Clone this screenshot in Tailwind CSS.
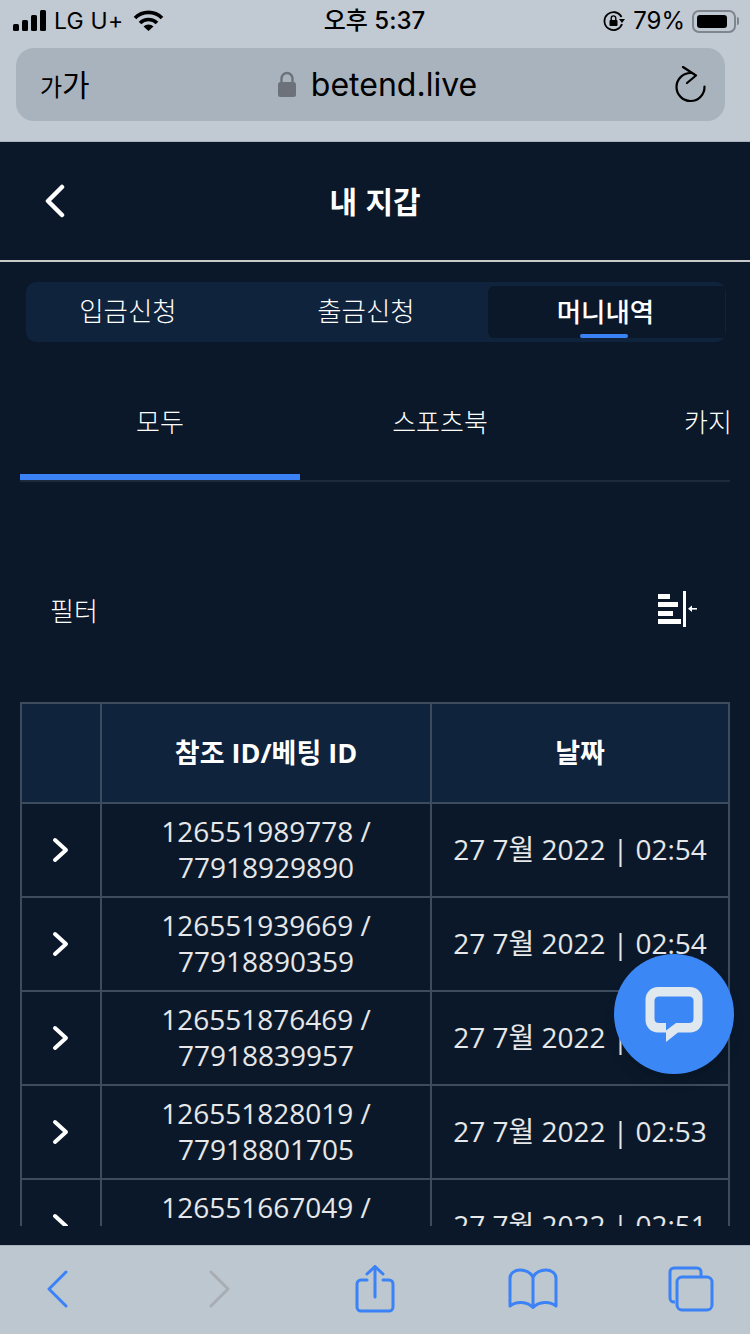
<!DOCTYPE html>
<html lang="ko">
<head>
  <meta charset="UTF-8" />
  <meta name="viewport" content="width=device-width, initial-scale=1" />
  <title>내 지갑</title>
  <script src="https://cdn.jsdelivr.net/npm/@tailwindcss/browser@4"></script>
</head>
<body class="bg-[#0a1829]">
  <div class="relative w-[750px] h-[1334px] overflow-hidden flex flex-col font-['Open_Sans','Noto_Sans_CJK_KR',sans-serif] text-white">

    <!-- safari top -->
    <div class="h-[142px] shrink-0 bg-[#c1c9d2] text-black font-['Inter','Noto_Sans_CJK_KR',sans-serif] border-b border-[#a9b2bb]">
      <div class="h-[42px] pl-[13px] pr-[11px] flex items-center justify-between text-[24px]">
        <div class="flex items-center w-[240px]">
          <svg width="34" height="22" viewBox="0 0 34 22" fill="#000"><rect x="0" y="14" width="6" height="7" rx="1.5"/><rect x="9" y="10" width="6" height="11" rx="1.5"/><rect x="18" y="5" width="6" height="16" rx="1.5"/><rect x="27" y="0" width="6" height="21" rx="1.5"/></svg>
          <span class="ml-[7px] text-[23px] tracking-[0.2px]">LG U+</span>
          <svg class="ml-[10px]" width="31" height="22" viewBox="0 0 31 22" fill="none" stroke="#000" stroke-width="3.6"><path d="M2 8 A19 19 0 0 1 29 8"/><path d="M7 13 A12 12 0 0 1 24 13"/><path d="M15.5 21 L10.5 16.5 A7 7 0 0 1 20.5 16.5 Z" fill="#000" stroke="none"/></svg>
        </div>
        <div class="text-[24px] font-medium -ml-[3px]">오후 5:37</div>
        <div class="flex items-center justify-end w-[240px]">
          <svg width="22" height="22" viewBox="0 0 22 22" fill="none" stroke="#000" stroke-width="1.8"><path d="M18.5 7 A9 9 0 1 0 19 14"/><path d="M16 9h6l-3 4z" fill="#000" stroke="none"/><rect x="6.500" y="10" width="8" height="6" rx="1" fill="#000" stroke="none"/><path d="M8.200 10V8.200a2.300 2.300 0 0 1 4.600 0V10" stroke-width="1.400"/></svg>
          <span class="ml-[8px] text-[24px]">79%</span>
          <div class="ml-[7px] w-[44px] h-[23px] rounded-[7px] border-2 border-[#7e858c] p-[3px]"><div class="w-[30px] h-full rounded-[3px] bg-black"></div></div>
          <div class="ml-[1px] w-[2px] h-[8px] rounded-r bg-[#7e858c]"></div>
        </div>
      </div>
      <div class="mx-[16px] mt-[6px] w-[709px] h-[73px] rounded-[18px] bg-[#a9b3bd] flex items-center justify-between pl-[24px] pr-[18px]">
        <div class="w-[50px] flex items-end leading-none"><span class="text-[24px]">가</span><span class="text-[30px]">가</span></div>
        <div class="flex items-center -ml-[8px]">
          <svg width="18" height="28" viewBox="0 0 18 28" fill="#6d727a"><path d="M3.500 12V7.500a5.500 5.500 0 0 1 11 0V12" fill="none" stroke="#6d727a" stroke-width="2.400"/><rect x="0" y="11" width="18" height="15" rx="2.500"/></svg>
          <span class="ml-[15px] text-[32px] leading-none">betend.live</span>
        </div>
        <svg width="34" height="38" viewBox="0 0 34 38" fill="none" stroke="#000" stroke-width="2.200" stroke-linecap="round" stroke-linejoin="round"><path d="M18 7 A14 14 0 1 0 31.500 20.500"/><path d="M10 1 L23 9.500 L14 17"/></svg>
      </div>
    </div>

    <!-- page -->
    <div class="flex-1 flex flex-col min-h-0 bg-[#0a1829]">
      <header class="h-[120px] shrink-0 flex items-center justify-center relative border-b-2 border-[#c9c9c9]">
        <svg class="absolute left-[44px] top-[42px]" width="22" height="34" viewBox="0 0 22 34" fill="none" stroke="#fff" stroke-width="4.500" stroke-linecap="round" stroke-linejoin="round"><path d="M18 3 L4 17 L18 31"/></svg>
        <h1 class="text-[30px] font-bold font-['Noto_Sans_CJK_KR',sans-serif] -mt-[1px]">내 지갑</h1>
      </header>

      <div class="ml-[26px] mt-[20px] w-[700px] h-[60px] shrink-0 rounded-[10px] bg-[#10233d] grid grid-cols-[231px_231px_238px] text-[26.5px] font-['Noto_Sans_CJK_KR',sans-serif]">
        <div class="flex items-center justify-center pr-[27px] pb-[4px] font-light">입금신청</div>
        <div class="flex items-center justify-center pr-[13px] pb-[4px] font-light">출금신청</div>
        <div class="relative flex items-center justify-center my-[4px] mr-[1px] pb-[2px] pr-[2px] rounded-l-[6px] bg-[#0a1829] font-medium">
          머니내역
          <span class="absolute bottom-0 left-[92px] w-[48px] h-[4px] rounded-[2px] bg-[#3b82f6]"></span>
        </div>
      </div>

      <div class="relative mx-[20px] mt-[59px] h-[81px] shrink-0 border-b-2 border-[#1d2a3b] flex text-[26px] font-light font-['Noto_Sans_CJK_KR',sans-serif]">
        <div class="w-[280px] text-center leading-[40px] relative">모두
          <span class="absolute left-0 top-[73px] w-[280px] h-[6px] bg-[#3b82f6]"></span>
        </div>
        <div class="w-[280px] text-center leading-[40px]">스포츠북</div>
        <div class="w-[150px] pl-[104px] whitespace-nowrap overflow-hidden leading-[40px]">카지노</div>
      </div>

      <div class="mt-[107px] h-[40px] shrink-0 pl-[50px] pr-[52px] flex items-center justify-between text-[26px] font-['Noto_Sans_CJK_KR',sans-serif] font-light">
        <span>필터</span>
        <svg width="40" height="36" viewBox="0 0 40 36" fill="#fff"><rect x="0" y="3" width="12" height="5"/><rect x="0" y="11" width="20" height="5"/><rect x="0" y="20" width="15" height="5"/><rect x="0" y="28" width="23" height="5"/><rect x="25" y="0" width="3" height="36"/><rect x="32" y="17" width="7" height="1.600"/><path d="M30 17.800 L34 14.500 V21 Z"/></svg>
      </div>

      <div class="mx-[20px] mt-[73px] flex-1 min-h-0 mb-[19px] overflow-hidden">
        <table class="w-[710px] table-fixed border-collapse text-center text-[28px] leading-[36px]">
          <colgroup><col class="w-[80px]" /><col class="w-[330px]" /><col class="w-[298px]" /></colgroup>
          <thead class="bg-[#10233d] text-[27px] font-bold">
            <tr class="h-[100px]">
              <th class="border-2 border-[#3d4b5e]"></th>
              <th class="border-2 border-[#3d4b5e]">참조 ID/베팅 ID</th>
              <th class="border-2 border-[#3d4b5e]">날짜</th>
            </tr>
          </thead>
          <tbody class="font-normal text-white/90">
            <tr class="h-[94px]">
              <td class="border-2 border-[#3d4b5e]"><svg class="mx-auto" width="18" height="26" viewBox="0 0 18 26" fill="none" stroke="#fff" stroke-width="4" stroke-linecap="round" stroke-linejoin="round"><path d="M3 3 L14 13 L3 23"/></svg></td>
              <td class="border-2 border-[#3d4b5e] pb-[2px]">126551989778 /<br />77918929890</td>
              <td class="border-2 border-[#3d4b5e] pb-[2px]">27 7월 2022 | 02:54</td>
            </tr>
            <tr class="h-[94px]">
              <td class="border-2 border-[#3d4b5e]"><svg class="mx-auto" width="18" height="26" viewBox="0 0 18 26" fill="none" stroke="#fff" stroke-width="4" stroke-linecap="round" stroke-linejoin="round"><path d="M3 3 L14 13 L3 23"/></svg></td>
              <td class="border-2 border-[#3d4b5e] pb-[2px]">126551939669 /<br />77918890359</td>
              <td class="border-2 border-[#3d4b5e] pb-[2px]">27 7월 2022 | 02:54</td>
            </tr>
            <tr class="h-[94px]">
              <td class="border-2 border-[#3d4b5e]"><svg class="mx-auto" width="18" height="26" viewBox="0 0 18 26" fill="none" stroke="#fff" stroke-width="4" stroke-linecap="round" stroke-linejoin="round"><path d="M3 3 L14 13 L3 23"/></svg></td>
              <td class="border-2 border-[#3d4b5e] pb-[2px]">126551876469 /<br />77918839957</td>
              <td class="border-2 border-[#3d4b5e] pb-[2px]">27 7월 2022 | 02:54</td>
            </tr>
            <tr class="h-[94px]">
              <td class="border-2 border-[#3d4b5e]"><svg class="mx-auto" width="18" height="26" viewBox="0 0 18 26" fill="none" stroke="#fff" stroke-width="4" stroke-linecap="round" stroke-linejoin="round"><path d="M3 3 L14 13 L3 23"/></svg></td>
              <td class="border-2 border-[#3d4b5e] pb-[2px]">126551828019 /<br />77918801705</td>
              <td class="border-2 border-[#3d4b5e] pb-[2px]">27 7월 2022 | 02:53</td>
            </tr>
            <tr class="h-[94px]">
              <td class="border-2 border-[#3d4b5e]"><svg class="mx-auto" width="18" height="26" viewBox="0 0 18 26" fill="none" stroke="#fff" stroke-width="4" stroke-linecap="round" stroke-linejoin="round"><path d="M3 3 L14 13 L3 23"/></svg></td>
              <td class="border-2 border-[#3d4b5e] pb-[38px]">126551667049 /</td>
              <td class="border-2 border-[#3d4b5e] pb-[2px]">27 7월 2022 | 02:51</td>
            </tr>
          </tbody>
        </table>
      </div>
    </div>

    <!-- live chat bubble -->
    <div class="absolute left-[614px] top-[954px] w-[120px] h-[120px] rounded-full bg-[#3b87f5] shadow-lg flex items-center justify-center">
      <svg width="58" height="56" viewBox="0 0 58 56" fill="#dfe7ef" class="mt-[1px] -ml-[1px]"><path fill-rule="evenodd" d="M13 0H45C52 0 57.500 5.500 57.500 12.500V33C57.500 40 52 45.500 45 45.500H33L21 55V45.500H13C6 45.500 0.500 40 0.500 33V12.500C0.500 5.500 6 0 13 0ZM14 9.500C11 9.500 9.500 11 9.500 14V31.500C9.500 34.500 11 36 14 36H21V43.500L31 36H44C47 36 48.500 34.500 48.500 31.500V14C48.500 11 47 9.500 44 9.500Z"/></svg>
    </div>

    <!-- safari bottom -->
    <div class="h-[89px] shrink-0 bg-[#bdc7d0] border-t border-[#a9b2bb] flex items-center pl-[46px] pb-[2px]">
      <svg width="24" height="38" viewBox="0 0 24 38" fill="none" stroke="#3b82f6" stroke-width="3" stroke-linecap="round" stroke-linejoin="round"><path d="M20 2 L3 19 L20 36"/></svg>
      <svg class="ml-[137px]" width="24" height="38" viewBox="0 0 24 38" fill="none" stroke="#a8adb2" stroke-width="3" stroke-linecap="round" stroke-linejoin="round"><path d="M4 2 L21 19 L4 36"/></svg>
      <svg class="ml-[124px]" width="40" height="48" viewBox="0 0 40 48" fill="none" stroke="#3b82f6" stroke-width="3" stroke-linecap="round" stroke-linejoin="round"><path d="M12 15H6A4 4 0 0 0 2 19V42A4 4 0 0 0 6 46H34A4 4 0 0 0 38 42V19A4 4 0 0 0 34 15H28"/><path d="M20 32V2"/><path d="M12 9L20 1.500L28 9"/></svg>
      <svg class="ml-[113px]" width="50" height="42" viewBox="0 0 50 42" fill="none" stroke="#3b82f6" stroke-width="3" stroke-linecap="round" stroke-linejoin="round"><path d="M25 9C22 4 17 2 12 2C7 2 2 5 2 10V38C8 33 19 33 25 39.500C31 33 42 33 48 38V10C48 5 43 2 38 2C33 2 28 4 25 9Z"/><path d="M25 9V38"/></svg>
      <svg class="ml-[110px]" width="46" height="46" viewBox="0 0 46 46" fill="none" stroke="#3b82f6" stroke-width="3" stroke-linejoin="round"><path d="M7 36H6A4 4 0 0 1 2 32V6A4 4 0 0 1 6 2H29A4 4 0 0 1 33 6V11"/><rect x="9" y="11" width="35" height="33" rx="5"/></svg>
    </div>
  </div>
</body>
</html>
